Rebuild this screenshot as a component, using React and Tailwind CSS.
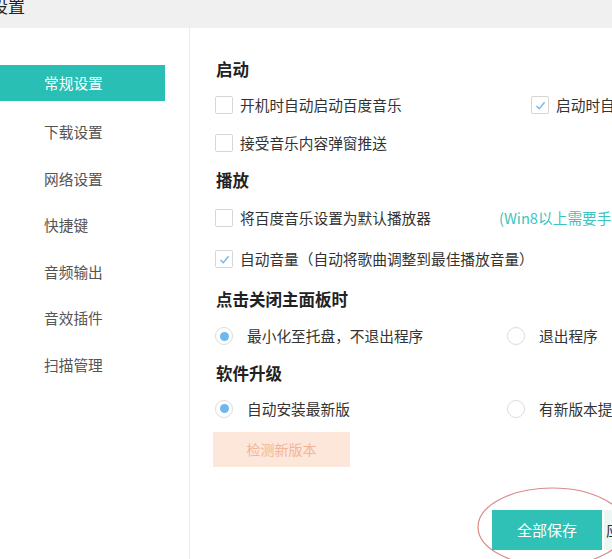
import React from 'react';

const font = { fontFamily: '"Noto Sans CJK SC", "Noto Sans", sans-serif' };

const menu = ['常规设置', '下载设置', '网络设置', '快捷键', '音频输出', '音效插件', '扫描管理'];

function Checkbox({ checked }) {
    return (
        <span className="size-[18px] shrink-0 border border-[#d6d6d6] rounded-[2px] bg-white flex items-center justify-center">
            {checked && (
                <svg viewBox="0 0 16 16" className="size-[13px]">
                    <path d="M3 8.5 L6.5 12 L13 4" fill="none" stroke="#7ab8e6" strokeWidth="1.8" />
                </svg>
            )}
        </span>
    );
}

function Radio({ checked }) {
    return (
        <span className="size-[18px] shrink-0 border border-[#dcdcdc] rounded-full bg-white flex items-center justify-center">
            {checked && <span className="size-[9px] rounded-full bg-[#6fb7ec]"></span>}
        </span>
    );
}

function Heading({ children, h }) {
    return (
        <div className={`${h} flex items-center pl-[1px] text-[16.5px] font-bold text-[#222]`}>
            {children}
        </div>
    );
}

export default function App() {
    return (
        <div className="w-[612px] h-[559px] bg-white overflow-hidden relative" style={font}>
            {/* Title bar */}
            <div className="h-[28px] bg-[#f0f0f0] overflow-hidden">
                <div className="ml-[-9px] mt-[-7px] text-[17px] text-[#222]">设置</div>
            </div>

            <div className="flex h-[531px]">
                {/* Sidebar */}
                <div className="w-[190px] shrink-0 border-r border-r-[#ececec] pt-[37px] pr-[24px]">
                    {menu.map((item, i) =>
                        i === 0 ? (
                            <div key={item} className="h-[36px] mb-[8px] bg-[#29bfb4] flex items-center pl-[44px] text-[14.7px] text-white">
                                {item}
                            </div>
                        ) : (
                            <div key={item} className="h-[46.5px] flex items-center pl-[44px] text-[14.7px] text-[#555]">
                                {item}
                            </div>
                        )
                    )}
                </div>

                {/* Content */}
                <div className="flex-1 min-w-0 pl-[25px] pt-[24px] text-[14.7px] text-[#333] whitespace-nowrap overflow-hidden">
                    <Heading h="h-[35px]">启动</Heading>
                    <div className="h-[37px] flex items-center">
                        <div className="w-[316px] shrink-0 flex items-center gap-[7px]">
                            <Checkbox />
                            <span>开机时自动启动百度音乐</span>
                        </div>
                        <div className="shrink-0 flex items-center gap-[7px]">
                            <Checkbox checked />
                            <span>启动时自动播放</span>
                        </div>
                    </div>
                    <div className="h-[38px] flex items-center gap-[7px]">
                        <Checkbox />
                        <span>接受音乐内容弹窗推送</span>
                    </div>

                    <Heading h="h-[37px]">播放</Heading>
                    <div className="h-[39px] flex items-center">
                        <div className="w-[284px] shrink-0 flex items-center gap-[7px]">
                            <Checkbox />
                            <span>将百度音乐设置为默认播放器</span>
                        </div>
                        <span className="shrink-0 text-[#3cc4c0]">(Win8以上需要手动设置)</span>
                    </div>
                    <div className="h-[42px] flex items-center gap-[7px]">
                        <Checkbox checked />
                        <span>自动音量（自动将歌曲调整到最佳播放音量）</span>
                    </div>

                    <Heading h="h-[38px]">点击关闭主面板时</Heading>
                    <div className="h-[37px] flex items-center">
                        <div className="w-[292px] shrink-0 flex items-center gap-[14px]">
                            <Radio checked />
                            <span>最小化至托盘，不退出程序</span>
                        </div>
                        <div className="shrink-0 flex items-center gap-[14px]">
                            <Radio />
                            <span>退出程序</span>
                        </div>
                    </div>

                    <Heading h="h-[36px]">软件升级</Heading>
                    <div className="h-[36px] flex items-center">
                        <div className="w-[292px] shrink-0 flex items-center gap-[14px]">
                            <Radio checked />
                            <span>自动安装最新版</span>
                        </div>
                        <div className="shrink-0 flex items-center gap-[14px]">
                            <Radio />
                            <span>有新版本提醒我</span>
                        </div>
                    </div>

                    <div className="mt-[5px] ml-[-2px] w-[137px] h-[35px] bg-[#fde6da] text-[#f2b59a] flex items-center justify-center text-[14px]">
                        检测新版本
                    </div>

                    {/* Footer buttons */}
                    <div className="mt-[43px] pl-[277px] flex gap-[2px]">
                        <div className="w-[110px] h-[40px] shrink-0 bg-[#2fc1b5] text-white text-[15px] flex items-center justify-center">
                            全部保存
                        </div>
                        <div className="w-[100px] h-[40px] shrink-0 bg-[#eef6f5] text-[#333] text-[15px] flex items-center pl-[2px]">
                            应用
                        </div>
                    </div>
                </div>
            </div>

            {/* Annotation ellipse */}
            <svg className="absolute left-0 top-0 pointer-events-none" width="612" height="559">
                <ellipse cx="552" cy="527" rx="74" ry="39" fill="none" stroke="#d98a8a" strokeWidth="1.2" />
            </svg>
        </div>
    );
}
